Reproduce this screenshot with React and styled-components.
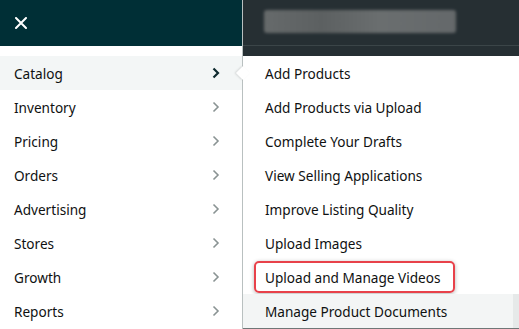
import React from 'react';
import styled, { createGlobalStyle } from 'styled-components';

const GlobalStyle = createGlobalStyle`
  html, body {
    margin: 0;
    padding: 0;
    background: #ffffff;
    overflow: hidden;
  }
  body {
    font-family: "Noto Sans", "Open Sans", Arial, sans-serif;
    color: #0f1111;
  }
`;

const Page = styled.div`
  display: flex;
  width: 519px;
  height: 329px;
  overflow: hidden;
`;

const SideNav = styled.div`
  width: 242px;
  flex-shrink: 0;
  display: flex;
  flex-direction: column;
  border-right: 1px solid #b9c0c0;
  background: #ffffff;
  position: relative;
  z-index: 2;
`;

const NavHeader = styled.div`
  height: 46px;
  background: #002f36;
  display: flex;
  align-items: center;
  padding-left: 14px;
  margin-bottom: 10px;
`;

const CloseButton = styled.button`
  border: none;
  background: transparent;
  padding: 0;
  width: 14px;
  height: 14px;
  display: flex;
  align-items: center;
  justify-content: center;
  cursor: pointer;
`;

const NavList = styled.div`
  display: flex;
  flex-direction: column;
`;

const NavItem = styled.div`
  height: 34px;
  display: flex;
  align-items: center;
  justify-content: space-between;
  padding: 0 22px 0 14px;
  font-size: 13.6px;
  color: #0f1111;
  background: ${(p) => (p.active ? '#f3f6f6' : 'transparent')};
  position: relative;
`;

const Pointer = styled.span`
  position: absolute;
  right: -1px;
  top: 50%;
  width: 10px;
  height: 10px;
  background: #ffffff;
  transform: translate(50%, -50%) rotate(45deg);
  box-shadow: -1px 1px 2px rgba(0, 0, 0, 0.12);
`;

const Main = styled.div`
  flex: 1;
  display: flex;
  flex-direction: column;
  min-width: 0;
`;

const TopBar = styled.div`
  height: 56px;
  background: #262f33;
  display: flex;
  flex-direction: column;
`;

const TopBarInner = styled.div`
  height: 46px;
  border-bottom: 1px solid #3b4548;
  box-sizing: border-box;
  display: flex;
  align-items: center;
  padding-left: 21px;
`;

const BlurredName = styled.div`
  width: 192px;
  height: 23px;
  margin-top: -2px;
  border-radius: 3px;
  background: linear-gradient(90deg, #666a6b 0%, #5c6061 30%, #6a6e6f 60%, #64686a 100%);
  filter: blur(1.5px);
`;

const Flyout = styled.div`
  flex: 1;
  display: flex;
  flex-direction: column;
  background: #ffffff;
  border-bottom: 1px solid #6f7777;
`;

const FlyItem = styled.div`
  height: 34px;
  flex-shrink: 0;
  display: flex;
  align-items: center;
  padding-left: ${(p) => (p.highlight ? '11px' : '22px')};
  font-size: 13.6px;
  color: #0f1111;
  background: ${(p) => (p.hover ? '#f3f5f5' : 'transparent')};
  box-sizing: border-box;
  border-right: ${(p) => (p.hover ? '6px solid #e6e9e9' : 'none')};
`;

const Highlight = styled.span`
  display: flex;
  align-items: center;
  width: 201px;
  height: 32px;
  box-sizing: border-box;
  padding-left: 9px;
  border: 2px solid #e8414a;
  border-radius: 5px;
  box-shadow: 0 1px 4px rgba(0, 0, 0, 0.3);
`;

const Chevron = ({ dark }) => (
  <svg width="8" height="12" viewBox="0 0 8 12">
    <path
      d="M1.5 1.5 L6 6 L1.5 10.5"
      fill="none"
      stroke={dark ? '#0f2a2f' : '#8a9393'}
      strokeWidth={dark ? 2.2 : 1.6}
    />
  </svg>
);

const navItems = ['Catalog', 'Inventory', 'Pricing', 'Orders', 'Advertising', 'Stores', 'Growth', 'Reports'];

const catalogItems = [
  'Add Products',
  'Add Products via Upload',
  'Complete Your Drafts',
  'View Selling Applications',
  'Improve Listing Quality',
  'Upload Images',
  'Upload and Manage Videos',
  'Manage Product Documents',
];

export default function App() {
  return (
    <>
      <GlobalStyle />
      <Page>
        <SideNav>
          <NavHeader>
            <CloseButton aria-label="Close">
              <svg width="12" height="12" viewBox="0 0 12 12">
                <path d="M1 1 L11 11 M11 1 L1 11" stroke="#ffffff" strokeWidth="2" strokeLinecap="round" />
              </svg>
            </CloseButton>
          </NavHeader>
          <NavList>
            {navItems.map((name, i) => (
              <NavItem key={name} active={i === 0}>
                {name}
                <Chevron dark={i === 0} />
                {i === 0 && <Pointer />}
              </NavItem>
            ))}
          </NavList>
        </SideNav>
        <Main>
          <TopBar>
            <TopBarInner>
              <BlurredName />
            </TopBarInner>
          </TopBar>
          <Flyout>
            {catalogItems.map((name) =>
              name === 'Upload and Manage Videos' ? (
                <FlyItem key={name} highlight>
                  <Highlight>{name}</Highlight>
                </FlyItem>
              ) : (
                <FlyItem key={name} hover={name === 'Manage Product Documents'}>
                  {name}
                </FlyItem>
              )
            )}
          </Flyout>
        </Main>
      </Page>
    </>
  );
}
